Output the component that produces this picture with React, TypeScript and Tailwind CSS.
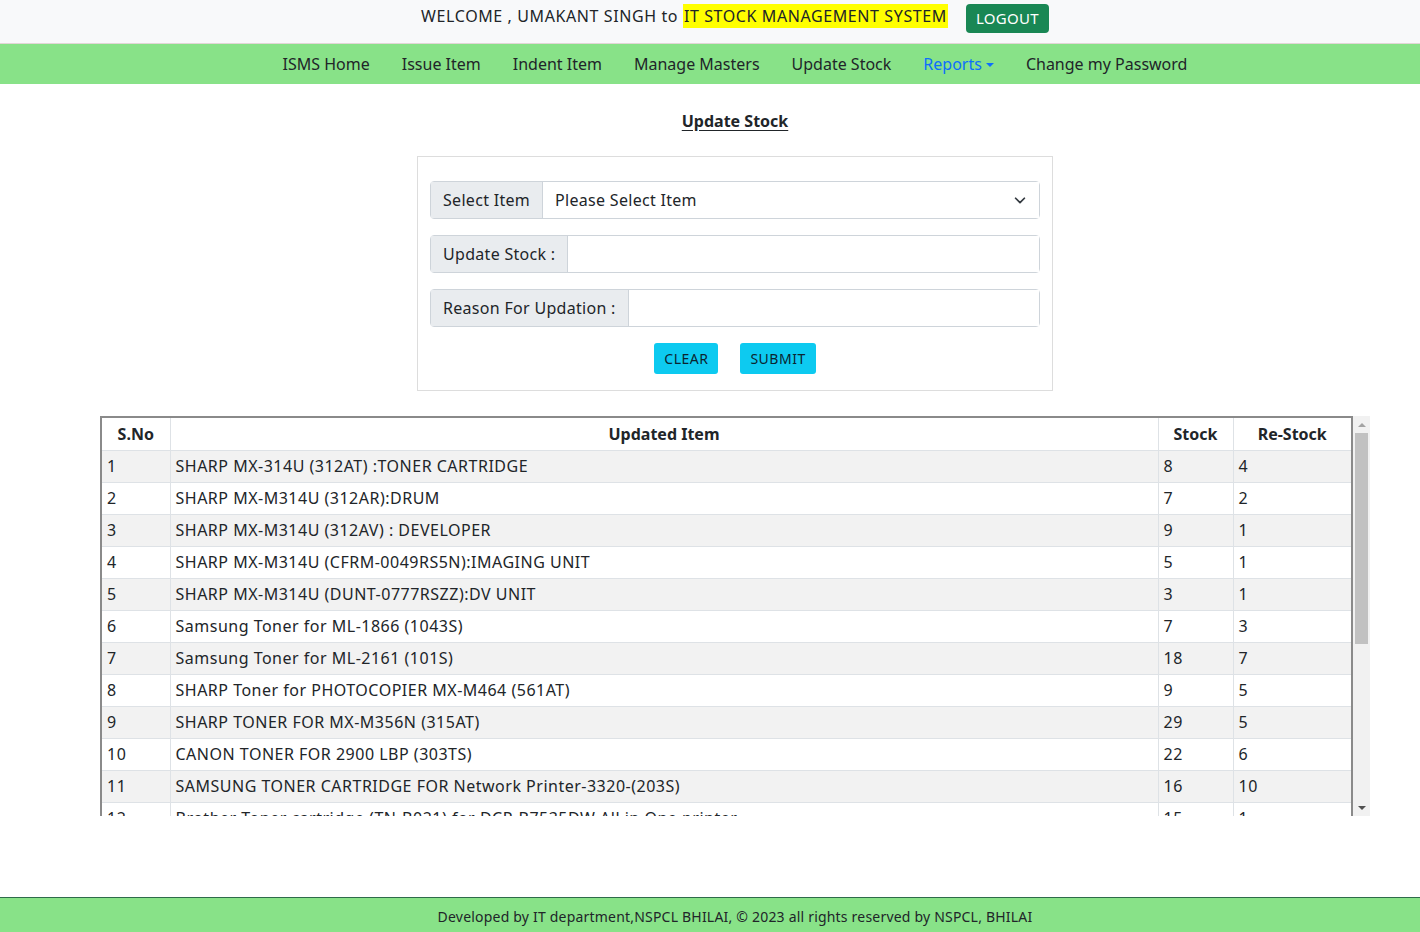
import React from "react";

const rows: [number, string, number, number][] = [
  [1, "SHARP MX-314U (312AT) :TONER CARTRIDGE", 8, 4],
  [2, "SHARP MX-M314U (312AR):DRUM", 7, 2],
  [3, "SHARP MX-M314U (312AV) : DEVELOPER", 9, 1],
  [4, "SHARP MX-M314U (CFRM-0049RS5N):IMAGING UNIT", 5, 1],
  [5, "SHARP MX-M314U (DUNT-0777RSZZ):DV UNIT", 3, 1],
  [6, "Samsung Toner for ML-1866 (1043S)", 7, 3],
  [7, "Samsung Toner for ML-2161 (101S)", 18, 7],
  [8, "SHARP Toner for PHOTOCOPIER MX-M464 (561AT)", 9, 5],
  [9, "SHARP TONER FOR MX-M356N (315AT)", 29, 5],
  [10, "CANON TONER FOR 2900 LBP (303TS)", 22, 6],
  [11, "SAMSUNG TONER CARTRIDGE FOR Network Printer-3320-(203S)", 16, 10],
  [12, "Brother Toner cartridge (TN-B021) for DCP-B7535DW All in One printer", 15, 1],
  [13, "HP 88A Toner Cartridge (CC388A)", 4, 2],
];

const navItems = ["ISMS Home", "Issue Item", "Indent Item", "Manage Masters", "Update Stock"];

function InputGroup({ label, children }: { label: string; children?: React.ReactNode }) {
  return (
    <div className="flex h-[38px] rounded border border-[#ced4da]">
      <span className="flex items-center whitespace-nowrap border-r border-[#ced4da] bg-[#e9ecef] px-3 tracking-[0.3px] text-[#212529]">
        {label}
      </span>
      <div className="flex flex-1 items-center bg-white px-3">{children}</div>
    </div>
  );
}

export default function App() {
  return (
    <div
      className="flex min-h-[932px] flex-col bg-white text-[16px] text-[#212529]"
      style={{ fontFamily: '"Noto Sans", "Open Sans", sans-serif' }}
    >
      <header className="h-[44px] border-b border-[#e2d6d6] bg-[#f8f9fa] pl-[50px]">
        <div className="flex h-full items-start justify-center gap-[18px] pt-[4px]">
          <p className="text-[16px] tracking-[0.6px] text-[#212529]">
            WELCOME , UMAKANT SINGH to{" "}
            <span className="bg-[#ffff00] px-[1px] py-[1px]">IT STOCK MANAGEMENT SYSTEM</span>
          </p>
          <button className="h-[29px] rounded bg-[#198754] px-[10px] text-[15px] tracking-[0.3px] text-white">LOGOUT</button>
        </div>
      </header>

      <nav className="h-[40px] bg-[#88e288] pl-[50px]">
        <ul className="flex h-full items-center justify-center">
          {navItems.map((n) => (
            <li key={n} className="px-4 text-[#212529]">
              {n}
            </li>
          ))}
          <li className="flex items-center gap-1 px-4 text-[#0d6efd]">
            Reports
            <span className="mt-[1px] border-x-[4px] border-t-[4px] border-x-transparent border-t-[#0d6efd]" />
          </li>
          <li className="px-4 text-[#212529]">Change my Password</li>
        </ul>
      </nav>

      <main className="flex-1 pl-[50px]">
        <h2 className="mt-[25px] text-center font-bold underline underline-offset-[3px]">Update Stock</h2>

        <div className="mx-auto mt-[23px] w-[636px] border border-[#dddddd] px-[12px] pb-[16px] pt-[24px]">
          <div className="flex flex-col gap-[16px]">
            <InputGroup label="Select Item">
              <span className="flex-1 tracking-[0.3px]">Please Select Item</span>
              <svg width="14" height="14" viewBox="0 0 16 16" fill="none" stroke="#343a40" strokeWidth="2" strokeLinecap="round" strokeLinejoin="round">
                <path d="M3 6l5 5 5-5" />
              </svg>
            </InputGroup>
            <InputGroup label="Update Stock :" />
            <InputGroup label="Reason For Updation :" />
          </div>
          <div className="mt-[16px] flex justify-center gap-[22px]">
            <button className="h-[31px] rounded-[3px] bg-[#0dcaf0] px-[10px] text-[14px] tracking-[0.5px] text-[#0b2530]">CLEAR</button>
            <button className="h-[31px] rounded-[3px] bg-[#0dcaf0] px-[10px] text-[14px] tracking-[0.5px] text-[#0b2530]">SUBMIT</button>
          </div>
        </div>

        <div className="mx-[50px] mt-[25px] flex h-[400px]">
          <div className="flex-1 overflow-hidden border-x-2 border-t-2 border-[#8a8a8a]">
            <table className="w-full border-collapse">
              <colgroup>
                <col className="w-[68px]" />
                <col />
                <col className="w-[75px]" />
                <col className="w-[118px]" />
              </colgroup>
              <thead>
                <tr className="h-[32px] bg-white">
                  <th className="border-b border-r border-[#dee2e6] text-center font-bold">S.No</th>
                  <th className="border-b border-r border-[#dee2e6] text-center font-bold">Updated Item</th>
                  <th className="border-b border-r border-[#dee2e6] text-center font-bold">Stock</th>
                  <th className="border-b border-[#dee2e6] text-center font-bold">Re-Stock</th>
                </tr>
              </thead>
              <tbody>
                {rows.map(([no, item, stock, re]) => (
                  <tr key={no} className={`h-[32px] ${no % 2 === 1 ? "bg-[#f2f2f2]" : "bg-white"}`}>
                    <td className="border-b border-r border-[#dee2e6] pl-[5px] tracking-[0.5px]">{no}</td>
                    <td className="border-b border-r border-[#dee2e6] pl-[5px] tracking-[0.5px]">{item}</td>
                    <td className="border-b border-r border-[#dee2e6] pl-[5px] tracking-[0.5px]">{stock}</td>
                    <td className="border-b border-[#dee2e6] pl-[5px] tracking-[0.5px]">{re}</td>
                  </tr>
                ))}
              </tbody>
            </table>
          </div>
          <div className="flex w-[17px] flex-col bg-[#f1f1f1]">
            <div className="flex h-[17px] items-center justify-center">
              <span className="border-x-[4px] border-b-[4px] border-x-transparent border-b-[#a3a3a3]" />
            </div>
            <div className="mx-[2px] h-[211px] bg-[#c1c1c1]" />
            <div className="flex-1" />
            <div className="flex h-[17px] items-center justify-center">
              <span className="border-x-[4px] border-t-[4px] border-x-transparent border-t-[#505050]" />
            </div>
          </div>
        </div>
      </main>

      <footer className="mt-[81px] h-[35px] border-t border-[#2e6b4a] bg-[#88e288] pl-[50px]">
        <p className="pt-[8px] text-center text-[14px] tracking-[0.2px] text-[#212529]">
          Developed by IT department,NSPCL BHILAI, © 2023 all rights reserved by NSPCL, BHILAI
        </p>
      </footer>
    </div>
  );
}
